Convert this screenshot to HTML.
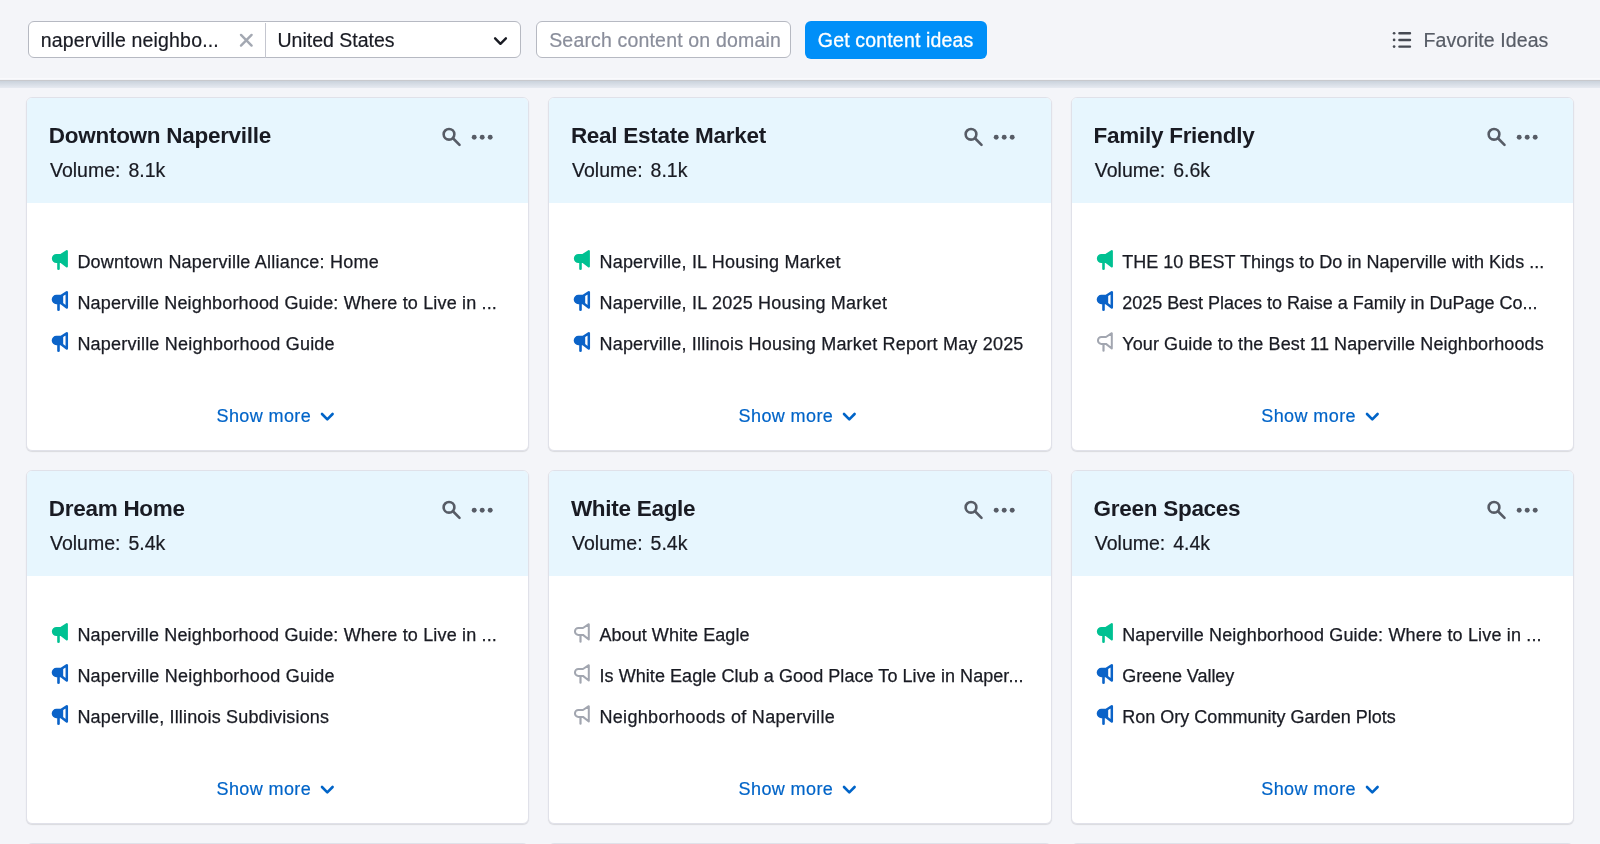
<!DOCTYPE html>
<html><head><meta charset="utf-8"><style>
*{box-sizing:border-box;margin:0;padding:0}
html,body{width:1600px;height:844px;overflow:hidden;}
body{will-change:transform;background:#f4f5f9;font-family:"Liberation Sans",sans-serif;color:#191b23}
.hdr{position:absolute;left:0;top:0;width:1600px;height:80px;background:#f4f5f9;z-index:2}
.hl1{position:absolute;left:0;top:78px;width:1600px;height:1px;background:#fafafd}
.hl2{position:absolute;left:0;top:80px;width:1600px;height:1px;background:#c8c9cd}
.hsh{position:absolute;left:0;top:81px;width:1600px;height:7px;background:linear-gradient(#cad2dc,#e6eaf1)}
.inp{position:absolute;top:21.4px;height:37px;border:1px solid #b6b9c2;border-radius:6px;background:#fff}
.ht{position:absolute;font-size:19.5px;line-height:19.5px;white-space:nowrap;-webkit-text-stroke:.2px currentColor}
.card{position:absolute;width:502.2px;height:354px;background:#fff;border:1px solid #e0e1e9;border-radius:6px;box-shadow:0 1px 1px rgba(25,27,35,.12);overflow:hidden}
.ch{position:absolute;left:0;top:0;right:0;height:105px;background:#e7f6fe}
.tt{position:absolute;left:21.8px;top:26.8px;letter-spacing:-.28px;font-size:22.5px;line-height:22.5px;font-weight:700;white-space:nowrap}
.vol{position:absolute;left:23px;top:63.4px;font-size:19.5px;line-height:19.5px;white-space:nowrap;-webkit-text-stroke:.2px #191b23}
.vol .vn{margin-left:8px}
.si{position:absolute;left:415px;top:29.2px}
.di{position:absolute;left:444px;top:34px}
.it{position:absolute;left:21px;height:26px;white-space:nowrap}
.it .mg{position:absolute;left:0;top:0}
.it span{position:absolute;left:29.4px;top:6px;font-size:18px;line-height:18px;letter-spacing:.18px;-webkit-text-stroke:.25px #191b23}
.sm{position:absolute;left:189.5px;top:309px;color:#0064c8;font-size:18px;line-height:18px;white-space:nowrap;letter-spacing:.4px;-webkit-text-stroke:.2px #0064c8}
.chev{position:absolute;left:292.80px;top:313.9px}
</style></head><body>
<div class="hdr"><div class="hl1"></div><div class="hl2"></div><div class="hsh"></div>
 <div class="inp" style="left:28px;width:492.5px"></div>
 <div style="position:absolute;left:265px;top:22.5px;width:1px;height:35px;background:#c4c6cf"></div>
 <div class="ht" style="left:40.8px;top:30.6px;letter-spacing:.17px">naperville neighbo...</div>
 <svg style="position:absolute;left:237px;top:31.5px" width="18" height="16" viewBox="0 0 18 16"><path d="M4 2.9L14.6 13.6M14.6 2.9L4 13.6" stroke="#a3a8b2" stroke-width="2.4" stroke-linecap="round"/></svg>
 <div class="ht" style="left:277.5px;top:30.9px">United States</div>
 <svg style="position:absolute;left:490px;top:33px" width="20" height="16" viewBox="0 0 20 16"><path d="M5.1 5.3L10.45 10.8L15.9 5.3" fill="none" stroke="#191b23" stroke-width="2.4" stroke-linecap="round" stroke-linejoin="round"/></svg>
 <div class="inp" style="left:536.4px;width:255px"></div>
 <div class="ht" style="left:549.2px;top:31.2px;color:#8a8e9b;letter-spacing:.17px">Search content on domain</div>
 <div style="position:absolute;left:805px;top:21px;width:181.5px;height:37.6px;background:#008ff8;border-radius:6px"></div>
 <div class="ht" style="left:817.8px;top:30.5px;color:#fff;letter-spacing:.17px;-webkit-text-stroke:.3px #fff">Get content ideas</div>
 <svg style="position:absolute;left:1390px;top:28px" width="24" height="24" viewBox="0 0 24 24"><g fill="#464a53"><circle cx="4.1" cy="5.26" r="1.35"/><circle cx="4.1" cy="11.94" r="1.35"/><circle cx="4.1" cy="18.6" r="1.35"/></g><path d="M9.4 5.26H20M9.4 11.94H20M9.4 18.6H20" stroke="#464a53" stroke-width="2.4" stroke-linecap="round"/></svg>
 <div class="ht" style="left:1423.6px;top:31.1px;color:#575c66;letter-spacing:.09px">Favorite Ideas</div>
</div>
<div class="card" style="left:26px;top:97px;width:503px">
<div class="ch"><div class="tt">Downtown Naperville</div><div class="vol"><span>Volume:</span><span class="vn">8.1k</span></div><svg class="si" width="26" height="26" viewBox="0 0 26 26"><circle cx="7" cy="7.3" r="5.35" fill="none" stroke="#575c66" stroke-width="2.6"/><path d="M11.2 11.5L17.5 17.8" stroke="#575c66" stroke-width="2.6" stroke-linecap="round"/></svg><svg class="di" width="26" height="10" viewBox="0 0 26 10"><circle cx="3.2" cy="5.2" r="2.45" fill="#575c66"/><circle cx="11.2" cy="5.2" r="2.45" fill="#575c66"/><circle cx="19.2" cy="5.2" r="2.45" fill="#575c66"/></svg></div>
<div class="it" style="top:149.00px"><svg class="mg" width="24" height="26" viewBox="0 0 24 26"><path d="M13 8L18.8 4.2L18.8 19.5L13 14.9L8.4 14.9A3.45 3.45 0 0 1 8.4 8Z" fill="#00c192" stroke="#00c192" stroke-width="2.2" stroke-linejoin="round"/><path d="M10.5 15.5L10.5 21.7" stroke="#00c192" stroke-width="2.6" stroke-linecap="round"/></svg><span style="letter-spacing:0.216px">Downtown Naperville Alliance: Home</span></div><div class="it" style="top:189.85px"><svg class="mg" width="24" height="26" viewBox="0 0 24 26"><path d="M15.2 8L15.2 14.9L8.4 14.9A3.45 3.45 0 0 1 8.4 8Z" fill="#0b63c8"/><path d="M13 8L18.8 4.2L18.8 19.5L13 14.9L8.4 14.9A3.45 3.45 0 0 1 8.4 8Z" fill="none" stroke="#0b63c8" stroke-width="2.5" stroke-linejoin="round"/><path d="M10.5 15.5L10.5 21.7" stroke="#0b63c8" stroke-width="2.6" stroke-linecap="round"/></svg><span style="letter-spacing:0.164px">Naperville Neighborhood Guide: Where to Live in ...</span></div><div class="it" style="top:230.70px"><svg class="mg" width="24" height="26" viewBox="0 0 24 26"><path d="M15.2 8L15.2 14.9L8.4 14.9A3.45 3.45 0 0 1 8.4 8Z" fill="#0b63c8"/><path d="M13 8L18.8 4.2L18.8 19.5L13 14.9L8.4 14.9A3.45 3.45 0 0 1 8.4 8Z" fill="none" stroke="#0b63c8" stroke-width="2.5" stroke-linejoin="round"/><path d="M10.5 15.5L10.5 21.7" stroke="#0b63c8" stroke-width="2.6" stroke-linecap="round"/></svg><span style="letter-spacing:0.216px">Naperville Neighborhood Guide</span></div>
<div class="sm">Show more</div><svg class="chev" width="16" height="10" viewBox="0 0 16 10"><path d="M2 2L7.3 7.3L12.6 2" fill="none" stroke="#0064c8" stroke-width="2.6" stroke-linecap="round" stroke-linejoin="round"/></svg>
</div><div class="card" style="left:548.1px;top:97px;width:503.7px">
<div class="ch"><div class="tt">Real Estate Market</div><div class="vol"><span>Volume:</span><span class="vn">8.1k</span></div><svg class="si" width="26" height="26" viewBox="0 0 26 26"><circle cx="7" cy="7.3" r="5.35" fill="none" stroke="#575c66" stroke-width="2.6"/><path d="M11.2 11.5L17.5 17.8" stroke="#575c66" stroke-width="2.6" stroke-linecap="round"/></svg><svg class="di" width="26" height="10" viewBox="0 0 26 10"><circle cx="3.2" cy="5.2" r="2.45" fill="#575c66"/><circle cx="11.2" cy="5.2" r="2.45" fill="#575c66"/><circle cx="19.2" cy="5.2" r="2.45" fill="#575c66"/></svg></div>
<div class="it" style="top:149.00px"><svg class="mg" width="24" height="26" viewBox="0 0 24 26"><path d="M13 8L18.8 4.2L18.8 19.5L13 14.9L8.4 14.9A3.45 3.45 0 0 1 8.4 8Z" fill="#00c192" stroke="#00c192" stroke-width="2.2" stroke-linejoin="round"/><path d="M10.5 15.5L10.5 21.7" stroke="#00c192" stroke-width="2.6" stroke-linecap="round"/></svg><span style="letter-spacing:0.198px">Naperville, IL Housing Market</span></div><div class="it" style="top:189.85px"><svg class="mg" width="24" height="26" viewBox="0 0 24 26"><path d="M15.2 8L15.2 14.9L8.4 14.9A3.45 3.45 0 0 1 8.4 8Z" fill="#0b63c8"/><path d="M13 8L18.8 4.2L18.8 19.5L13 14.9L8.4 14.9A3.45 3.45 0 0 1 8.4 8Z" fill="none" stroke="#0b63c8" stroke-width="2.5" stroke-linejoin="round"/><path d="M10.5 15.5L10.5 21.7" stroke="#0b63c8" stroke-width="2.6" stroke-linecap="round"/></svg><span style="letter-spacing:0.210px">Naperville, IL 2025 Housing Market</span></div><div class="it" style="top:230.70px"><svg class="mg" width="24" height="26" viewBox="0 0 24 26"><path d="M15.2 8L15.2 14.9L8.4 14.9A3.45 3.45 0 0 1 8.4 8Z" fill="#0b63c8"/><path d="M13 8L18.8 4.2L18.8 19.5L13 14.9L8.4 14.9A3.45 3.45 0 0 1 8.4 8Z" fill="none" stroke="#0b63c8" stroke-width="2.5" stroke-linejoin="round"/><path d="M10.5 15.5L10.5 21.7" stroke="#0b63c8" stroke-width="2.6" stroke-linecap="round"/></svg><span style="letter-spacing:0.194px">Naperville, Illinois Housing Market Report May 2025</span></div>
<div class="sm">Show more</div><svg class="chev" width="16" height="10" viewBox="0 0 16 10"><path d="M2 2L7.3 7.3L12.6 2" fill="none" stroke="#0064c8" stroke-width="2.6" stroke-linecap="round" stroke-linejoin="round"/></svg>
</div><div class="card" style="left:1070.8px;top:97px;width:503.1px">
<div class="ch"><div class="tt">Family Friendly</div><div class="vol"><span>Volume:</span><span class="vn">6.6k</span></div><svg class="si" width="26" height="26" viewBox="0 0 26 26"><circle cx="7" cy="7.3" r="5.35" fill="none" stroke="#575c66" stroke-width="2.6"/><path d="M11.2 11.5L17.5 17.8" stroke="#575c66" stroke-width="2.6" stroke-linecap="round"/></svg><svg class="di" width="26" height="10" viewBox="0 0 26 10"><circle cx="3.2" cy="5.2" r="2.45" fill="#575c66"/><circle cx="11.2" cy="5.2" r="2.45" fill="#575c66"/><circle cx="19.2" cy="5.2" r="2.45" fill="#575c66"/></svg></div>
<div class="it" style="top:149.00px"><svg class="mg" width="24" height="26" viewBox="0 0 24 26"><path d="M13 8L18.8 4.2L18.8 19.5L13 14.9L8.4 14.9A3.45 3.45 0 0 1 8.4 8Z" fill="#00c192" stroke="#00c192" stroke-width="2.2" stroke-linejoin="round"/><path d="M10.5 15.5L10.5 21.7" stroke="#00c192" stroke-width="2.6" stroke-linecap="round"/></svg><span style="letter-spacing:0.031px">THE 10 BEST Things to Do in Naperville with Kids ...</span></div><div class="it" style="top:189.85px"><svg class="mg" width="24" height="26" viewBox="0 0 24 26"><path d="M15.2 8L15.2 14.9L8.4 14.9A3.45 3.45 0 0 1 8.4 8Z" fill="#0b63c8"/><path d="M13 8L18.8 4.2L18.8 19.5L13 14.9L8.4 14.9A3.45 3.45 0 0 1 8.4 8Z" fill="none" stroke="#0b63c8" stroke-width="2.5" stroke-linejoin="round"/><path d="M10.5 15.5L10.5 21.7" stroke="#0b63c8" stroke-width="2.6" stroke-linecap="round"/></svg><span style="letter-spacing:-0.020px">2025 Best Places to Raise a Family in DuPage Co...</span></div><div class="it" style="top:230.70px"><svg class="mg" width="24" height="26" viewBox="0 0 24 26"><path d="M13 8L18.8 4.2L18.8 19.5L13 14.9L8.4 14.9A3.45 3.45 0 0 1 8.4 8Z" fill="none" stroke="#a2a6b0" stroke-width="2" stroke-linejoin="round"/><path d="M10.5 15.5L10.5 21.7" stroke="#a2a6b0" stroke-width="2.2" stroke-linecap="round"/></svg><span style="letter-spacing:0.107px">Your Guide to the Best 11 Naperville Neighborhoods</span></div>
<div class="sm">Show more</div><svg class="chev" width="16" height="10" viewBox="0 0 16 10"><path d="M2 2L7.3 7.3L12.6 2" fill="none" stroke="#0064c8" stroke-width="2.6" stroke-linecap="round" stroke-linejoin="round"/></svg>
</div><div class="card" style="left:26px;top:470px;width:503px">
<div class="ch"><div class="tt">Dream Home</div><div class="vol"><span>Volume:</span><span class="vn">5.4k</span></div><svg class="si" width="26" height="26" viewBox="0 0 26 26"><circle cx="7" cy="7.3" r="5.35" fill="none" stroke="#575c66" stroke-width="2.6"/><path d="M11.2 11.5L17.5 17.8" stroke="#575c66" stroke-width="2.6" stroke-linecap="round"/></svg><svg class="di" width="26" height="10" viewBox="0 0 26 10"><circle cx="3.2" cy="5.2" r="2.45" fill="#575c66"/><circle cx="11.2" cy="5.2" r="2.45" fill="#575c66"/><circle cx="19.2" cy="5.2" r="2.45" fill="#575c66"/></svg></div>
<div class="it" style="top:149.00px"><svg class="mg" width="24" height="26" viewBox="0 0 24 26"><path d="M13 8L18.8 4.2L18.8 19.5L13 14.9L8.4 14.9A3.45 3.45 0 0 1 8.4 8Z" fill="#00c192" stroke="#00c192" stroke-width="2.2" stroke-linejoin="round"/><path d="M10.5 15.5L10.5 21.7" stroke="#00c192" stroke-width="2.6" stroke-linecap="round"/></svg><span style="letter-spacing:0.164px">Naperville Neighborhood Guide: Where to Live in ...</span></div><div class="it" style="top:189.85px"><svg class="mg" width="24" height="26" viewBox="0 0 24 26"><path d="M15.2 8L15.2 14.9L8.4 14.9A3.45 3.45 0 0 1 8.4 8Z" fill="#0b63c8"/><path d="M13 8L18.8 4.2L18.8 19.5L13 14.9L8.4 14.9A3.45 3.45 0 0 1 8.4 8Z" fill="none" stroke="#0b63c8" stroke-width="2.5" stroke-linejoin="round"/><path d="M10.5 15.5L10.5 21.7" stroke="#0b63c8" stroke-width="2.6" stroke-linecap="round"/></svg><span style="letter-spacing:0.216px">Naperville Neighborhood Guide</span></div><div class="it" style="top:230.70px"><svg class="mg" width="24" height="26" viewBox="0 0 24 26"><path d="M15.2 8L15.2 14.9L8.4 14.9A3.45 3.45 0 0 1 8.4 8Z" fill="#0b63c8"/><path d="M13 8L18.8 4.2L18.8 19.5L13 14.9L8.4 14.9A3.45 3.45 0 0 1 8.4 8Z" fill="none" stroke="#0b63c8" stroke-width="2.5" stroke-linejoin="round"/><path d="M10.5 15.5L10.5 21.7" stroke="#0b63c8" stroke-width="2.6" stroke-linecap="round"/></svg><span style="letter-spacing:0.172px">Naperville, Illinois Subdivisions</span></div>
<div class="sm">Show more</div><svg class="chev" width="16" height="10" viewBox="0 0 16 10"><path d="M2 2L7.3 7.3L12.6 2" fill="none" stroke="#0064c8" stroke-width="2.6" stroke-linecap="round" stroke-linejoin="round"/></svg>
</div><div class="card" style="left:548.1px;top:470px;width:503.7px">
<div class="ch"><div class="tt">White Eagle</div><div class="vol"><span>Volume:</span><span class="vn">5.4k</span></div><svg class="si" width="26" height="26" viewBox="0 0 26 26"><circle cx="7" cy="7.3" r="5.35" fill="none" stroke="#575c66" stroke-width="2.6"/><path d="M11.2 11.5L17.5 17.8" stroke="#575c66" stroke-width="2.6" stroke-linecap="round"/></svg><svg class="di" width="26" height="10" viewBox="0 0 26 10"><circle cx="3.2" cy="5.2" r="2.45" fill="#575c66"/><circle cx="11.2" cy="5.2" r="2.45" fill="#575c66"/><circle cx="19.2" cy="5.2" r="2.45" fill="#575c66"/></svg></div>
<div class="it" style="top:149.00px"><svg class="mg" width="24" height="26" viewBox="0 0 24 26"><path d="M13 8L18.8 4.2L18.8 19.5L13 14.9L8.4 14.9A3.45 3.45 0 0 1 8.4 8Z" fill="none" stroke="#a2a6b0" stroke-width="2" stroke-linejoin="round"/><path d="M10.5 15.5L10.5 21.7" stroke="#a2a6b0" stroke-width="2.2" stroke-linecap="round"/></svg><span style="letter-spacing:0.055px">About White Eagle</span></div><div class="it" style="top:189.85px"><svg class="mg" width="24" height="26" viewBox="0 0 24 26"><path d="M13 8L18.8 4.2L18.8 19.5L13 14.9L8.4 14.9A3.45 3.45 0 0 1 8.4 8Z" fill="none" stroke="#a2a6b0" stroke-width="2" stroke-linejoin="round"/><path d="M10.5 15.5L10.5 21.7" stroke="#a2a6b0" stroke-width="2.2" stroke-linecap="round"/></svg><span style="letter-spacing:0.062px">Is White Eagle Club a Good Place To Live in Naper...</span></div><div class="it" style="top:230.70px"><svg class="mg" width="24" height="26" viewBox="0 0 24 26"><path d="M13 8L18.8 4.2L18.8 19.5L13 14.9L8.4 14.9A3.45 3.45 0 0 1 8.4 8Z" fill="none" stroke="#a2a6b0" stroke-width="2" stroke-linejoin="round"/><path d="M10.5 15.5L10.5 21.7" stroke="#a2a6b0" stroke-width="2.2" stroke-linecap="round"/></svg><span style="letter-spacing:0.311px">Neighborhoods of Naperville</span></div>
<div class="sm">Show more</div><svg class="chev" width="16" height="10" viewBox="0 0 16 10"><path d="M2 2L7.3 7.3L12.6 2" fill="none" stroke="#0064c8" stroke-width="2.6" stroke-linecap="round" stroke-linejoin="round"/></svg>
</div><div class="card" style="left:1070.8px;top:470px;width:503.1px">
<div class="ch"><div class="tt">Green Spaces</div><div class="vol"><span>Volume:</span><span class="vn">4.4k</span></div><svg class="si" width="26" height="26" viewBox="0 0 26 26"><circle cx="7" cy="7.3" r="5.35" fill="none" stroke="#575c66" stroke-width="2.6"/><path d="M11.2 11.5L17.5 17.8" stroke="#575c66" stroke-width="2.6" stroke-linecap="round"/></svg><svg class="di" width="26" height="10" viewBox="0 0 26 10"><circle cx="3.2" cy="5.2" r="2.45" fill="#575c66"/><circle cx="11.2" cy="5.2" r="2.45" fill="#575c66"/><circle cx="19.2" cy="5.2" r="2.45" fill="#575c66"/></svg></div>
<div class="it" style="top:149.00px"><svg class="mg" width="24" height="26" viewBox="0 0 24 26"><path d="M13 8L18.8 4.2L18.8 19.5L13 14.9L8.4 14.9A3.45 3.45 0 0 1 8.4 8Z" fill="#00c192" stroke="#00c192" stroke-width="2.2" stroke-linejoin="round"/><path d="M10.5 15.5L10.5 21.7" stroke="#00c192" stroke-width="2.6" stroke-linecap="round"/></svg><span style="letter-spacing:0.164px">Naperville Neighborhood Guide: Where to Live in ...</span></div><div class="it" style="top:189.85px"><svg class="mg" width="24" height="26" viewBox="0 0 24 26"><path d="M15.2 8L15.2 14.9L8.4 14.9A3.45 3.45 0 0 1 8.4 8Z" fill="#0b63c8"/><path d="M13 8L18.8 4.2L18.8 19.5L13 14.9L8.4 14.9A3.45 3.45 0 0 1 8.4 8Z" fill="none" stroke="#0b63c8" stroke-width="2.5" stroke-linejoin="round"/><path d="M10.5 15.5L10.5 21.7" stroke="#0b63c8" stroke-width="2.6" stroke-linecap="round"/></svg><span style="letter-spacing:-0.053px">Greene Valley</span></div><div class="it" style="top:230.70px"><svg class="mg" width="24" height="26" viewBox="0 0 24 26"><path d="M15.2 8L15.2 14.9L8.4 14.9A3.45 3.45 0 0 1 8.4 8Z" fill="#0b63c8"/><path d="M13 8L18.8 4.2L18.8 19.5L13 14.9L8.4 14.9A3.45 3.45 0 0 1 8.4 8Z" fill="none" stroke="#0b63c8" stroke-width="2.5" stroke-linejoin="round"/><path d="M10.5 15.5L10.5 21.7" stroke="#0b63c8" stroke-width="2.6" stroke-linecap="round"/></svg><span style="letter-spacing:0.018px">Ron Ory Community Garden Plots</span></div>
<div class="sm">Show more</div><svg class="chev" width="16" height="10" viewBox="0 0 16 10"><path d="M2 2L7.3 7.3L12.6 2" fill="none" stroke="#0064c8" stroke-width="2.6" stroke-linecap="round" stroke-linejoin="round"/></svg>
</div><div class="card" style="left:26px;top:843px;width:503px"><div class="ch"></div></div><div class="card" style="left:548.1px;top:843px;width:503.7px"><div class="ch"></div></div><div class="card" style="left:1070.8px;top:843px;width:503.1px"><div class="ch"></div></div>
</body></html>
